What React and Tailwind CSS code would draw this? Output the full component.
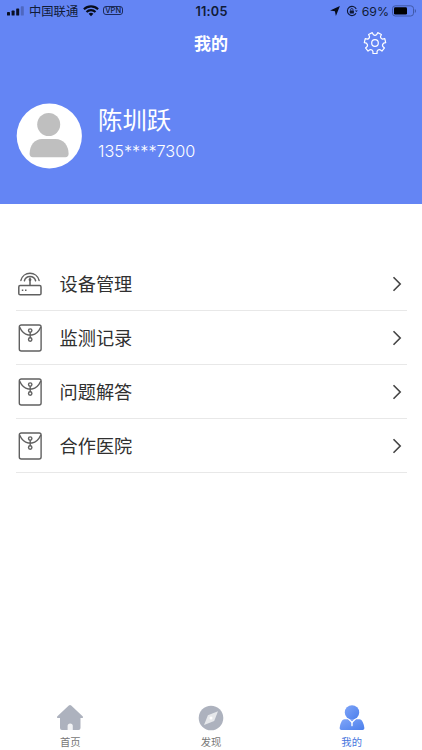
// Profile.jsx
const gearPoint = (r, deg) => {
  const a = (deg * Math.PI) / 180;
  return `${(12 + r * Math.cos(a)).toFixed(2)} ${(12 + r * Math.sin(a)).toFixed(2)}`;
};

// Seven teeth, with one pointing straight down
const GEAR_PATH =
  Array.from({ length: 7 }, (_, i) => {
    const c = 90 + (i * 360) / 7;
    return `${i ? "L" : "M"}${gearPoint(8.6, c - 14)}L${gearPoint(10.7, c - 11)}L${gearPoint(10.7, c + 11)}L${gearPoint(8.6, c + 14)}Q${gearPoint(7, c + 25.7)} ${gearPoint(8.6, c + 37.4)}`;
  }).join("") + "Z";

const ROWS = [
  { name: "设备管理", icon: RouterIcon },
  { name: "监测记录", icon: EnvelopeIcon },
  { name: "问题解答", icon: EnvelopeIcon },
  { name: "合作医院", icon: EnvelopeIcon },
];

const TABS = [
  { name: "首页", icon: HomeIcon },
  { name: "发现", icon: CompassIcon },
  { name: "我的", icon: UserIcon, active: true },
];

function RouterIcon() {
  return (
    <svg width="28" height="28" viewBox="0 0 28 28" fill="none" stroke="#606060" strokeWidth="1.5">
      <rect x="2.8" y="15.6" width="22.2" height="9.2" rx="1.3" />
      <path d="M14 15.500V9M4.900 11.200A9.400 9.400 0 0 1 23.100 11.200M8.400 11.600A5.800 5.800 0 0 1 19.600 11.600" transform="translate(0 -.8)" strokeLinecap="round" />
      <circle cx="14" cy="9.8" r="1.4" fill="#606060" stroke="none" />
      <path d="M5.800 20.200h1.500M9 20.200h1.500" />
    </svg>
  );
}

function EnvelopeIcon() {
  return (
    <svg width="28" height="28" viewBox="0 0 28 28" fill="none" stroke="#606060" strokeWidth="1.4">
      <rect x="3.3" y="1" width="21.8" height="26" rx="2" />
      <path d="M3.600 3C5.600 7.500 9 10.400 12.300 11M24.800 3C22.800 7.500 19.500 10.400 16.100 11M14.200 8.300v5.600M12.300 11h3.800" />
      <circle cx="14.2" cy="6.6" r="1.7" />
      <circle cx="14.2" cy="15.5" r="1.7" />
    </svg>
  );
}

function HomeIcon() {
  return (
    <svg width="28" height="28" viewBox="0 0 28 28">
      <path
        d="M12.800 1.500a1.800 1.800 0 0 1 2.400 0L26.600 12.200c.7.7.4 1.900-.5 1.900H24.500V24a2 2 0 0 1-2 2H6a2 2 0 0 1-2-2V14.100H1.900c-.9 0-1.200-1.200-.5-1.900Z"
        fill="#adb2be"
      />
      <path d="M11.600 26v-4a2.400 2.400 0 0 1 5.200 0v4Z" fill="#f2f3f5" />
    </svg>
  );
}

function CompassIcon() {
  return (
    <svg width="28" height="28" viewBox="0 0 28 28">
      <circle cx="14" cy="14" r="12.3" fill="#adb2be" />
      <path d="M21 7.300 17.200 16.900l-10.200 4 3.900-9.700Z" fill="#e6e8eb" />
      <circle cx="14" cy="14" r="1.5" fill="#fff" />
    </svg>
  );
}

function UserIcon() {
  return (
    <svg width="28" height="28" viewBox="0 0 28 28">
      <defs>
        <linearGradient id="user-fill" x1="0" y1="0" x2="1" y2="1">
          <stop offset="0" stopColor="#80a5f8" />
          <stop offset="1" stopColor="#4b7fec" />
        </linearGradient>
      </defs>
      <path d="M6.400 15.300h15.200c2.500 0 4.100 4.300 4.700 8.200.2 1.600-.4 2.500-1.700 2.500H3.400c-1.300 0-1.900-.9-1.700-2.500.6-3.900 2.200-8.200 4.700-8.200Z" fill="url(#user-fill)" />
      <path d="m10.300 14.800 3.700 3.500 3.700-3.500" fill="none" stroke="#fff" strokeWidth="1.2" />
      <path d="M13.300 17.500h1.400v4.200l-.7.8-.7-.8Z" fill="#fff" />
      <circle cx="14" cy="8.4" r="7.2" fill="url(#user-fill)" />
    </svg>
  );
}

function StatusBar() {
  return (
    <div className="h-[22px] flex items-center justify-between pl-[7px] pr-[6px] text-[#101b38]">
      <div className="w-[180px] flex items-center">
        <svg width="18" height="10" viewBox="0 0 18 10" fill="#0a1023">
          <rect y="6" width="3" height="3.6" rx=".7" />
          <rect x="4.6" y="4.5" width="3" height="5.1" rx=".7" />
          <rect x="9.2" y="2.4" width="3" height="7.2" rx=".7" />
          <rect x="13.8" y=".2" width="3" height="9.4" rx=".7" opacity=".25" />
        </svg>
        <span className="ml-[4px] pt-[2px] text-[12.3px] leading-none">中国联通</span>
        <svg className="ml-[5px]" width="16" height="12" viewBox="0 0 16 12" fill="none" stroke="#070c1b" strokeWidth="2.1">
          <path d="M.9 4.300a10.200 10.200 0 0 1 14.200 0M3.500 7a6.400 6.400 0 0 1 9 0" />
          <path d="M5.600 8.800a3.500 3.500 0 0 1 4.800 0L8 11.300Z" fill="#070c1b" stroke="none" />
        </svg>
        <span className="ml-[4px] w-[20px] h-[9px] flex items-center justify-center rounded-[3px] border border-[#1c2b5c] text-[7.5px] font-medium leading-none">
          VPN
        </span>
      </div>
      <span className="pt-[2px] text-[12.7px] font-semibold leading-none tracking-[0.2px]">11:05</span>
      <div className="w-[180px] flex items-center justify-end">
        <svg width="10" height="10" viewBox="0 0 10 10" fill="#070c1b">
          <path d="M9.900.1 5.900 9.900 4.900 5.300.1 4.400Z" />
        </svg>
        <svg className="ml-[6px]" width="12" height="12" viewBox="0 0 12 12" fill="none" stroke="#0d1734">
          <path d="M10.200 4.100A4.600 4.600 0 1 0 10 8.300" strokeWidth="1.1" />
          <path d="m8.900 5.500 1.500 1.500 1.400-1.500Z" fill="#0d1734" stroke="none" />
          <rect x="3.7" y="5.4" width="4.2" height="3.2" rx=".5" fill="#0d1734" stroke="none" />
          <path d="M4.600 5.500v-.8a1.200 1.200 0 0 1 2.400 0v.8" strokeWidth=".8" />
        </svg>
        <span className="ml-[4px] pt-[2px] text-[12.3px] leading-none">69%</span>
        <svg className="ml-[3px] -mr-px" width="25" height="12" viewBox="0 0 25 12">
          <rect x=".5" y=".8" width="21" height="10.2" rx="2.8" fill="none" stroke="#4059a8" />
          <rect x="2" y="2.3" width="13" height="7.2" rx="1.3" fill="#000" />
          <path d="M22.800 4v4c1.600-.6 1.600-3.400 0-4Z" fill="#4059a8" />
        </svg>
      </div>
    </div>
  );
}

export default function App() {
  return (
    <div className="w-full h-[750px] flex flex-col overflow-hidden bg-white font-['Inter','Noto_Sans_CJK_SC',sans-serif]">
      {/* Header */}
      <header className="h-[204px] shrink-0 bg-[#6485f4]">
        <StatusBar />
        <div className="h-[42px] grid grid-cols-3 items-center">
          <h1 className="col-start-2 pt-[2px] text-center text-[17px] font-bold leading-none text-white">我的</h1>
          <button className="justify-self-end mr-[35px]">
            <svg width="24" height="24" viewBox="0 0 24 24" fill="none" stroke="#fff" strokeWidth="1.2" strokeLinejoin="round">
              <path d={GEAR_PATH} />
              <circle cx="12" cy="12" r="3.3" />
            </svg>
          </button>
        </div>
        <div className="pt-[39px] pl-[16px] flex">
          <svg width="66" height="66" viewBox="0 0 66 66">
            <circle cx="33.3" cy="33" r="32.6" fill="#fff" />
            <circle cx="32.7" cy="21.5" r="11.5" fill="#bfbfbf" />
            <path d="M26 36h13.600c7.800 0 13 6.400 13 14.800 0 2.300-1.200 3.400-3.200 3.400H16.800c-2 0-3.200-1.100-3.200-3.400 0-8.400 4.800-14.800 12.400-14.800Z" fill="#bfbfbf" />
          </svg>
          <div className="ml-[16px] pt-[3px] text-white">
            <p className="text-[24.4px] leading-[28px]">陈圳跃</p>
            <p className="mt-[7px] text-[16.3px] leading-[20px] font-light">135****7300</p>
          </div>
        </div>
      </header>

      {/* Menu */}
      <main className="flex-1 pt-[53px] pl-[16px] pr-[15px]">
        {ROWS.map(({ name, icon: Icon }) => (
          <div key={name} className="h-[54px] flex items-center border-b border-[#e8e8e8]">
            <Icon />
            <span className="ml-[15.5px] pt-[2px] text-[18.2px] leading-none text-[#303030]">{name}</span>
            <svg className="ml-auto mr-[5px]" width="10" height="16" viewBox="0 0 10 16" fill="none" stroke="#444" strokeWidth="1.6">
              <path d="m1.500 1.200 6.700 6.800-6.700 6.800" />
            </svg>
          </div>
        ))}
      </main>

      {/* Tab bar */}
      <nav className="h-[46px] shrink-0 grid grid-cols-3">
        {TABS.map(({ name, icon: Icon, active }) => (
          <div key={name} className="flex flex-col items-center">
            <Icon />
            <span className={`mt-[5px] text-[10.3px] leading-none ${active ? "text-[#4775dd]" : "text-[#777]"}`}>{name}</span>
          </div>
        ))}
      </nav>
    </div>
  );
}
